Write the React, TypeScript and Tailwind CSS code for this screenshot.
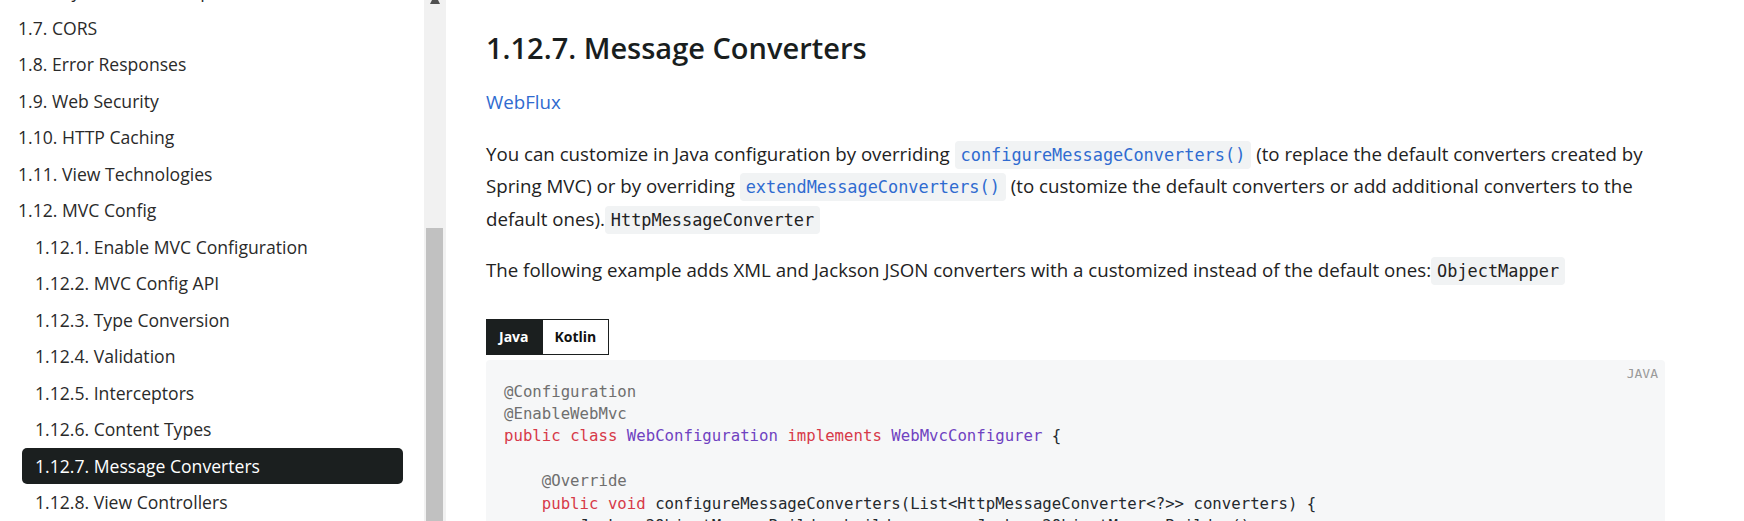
import React from "react";

const navItems: { label: string; level: number; active?: boolean }[] = [
  { label: "1.6. Asynchronous Requests", level: 1 },
  { label: "1.7. CORS", level: 1 },
  { label: "1.8. Error Responses", level: 1 },
  { label: "1.9. Web Security", level: 1 },
  { label: "1.10. HTTP Caching", level: 1 },
  { label: "1.11. View Technologies", level: 1 },
  { label: "1.12. MVC Config", level: 1 },
  { label: "1.12.1. Enable MVC Configuration", level: 2 },
  { label: "1.12.2. MVC Config API", level: 2 },
  { label: "1.12.3. Type Conversion", level: 2 },
  { label: "1.12.4. Validation", level: 2 },
  { label: "1.12.5. Interceptors", level: 2 },
  { label: "1.12.6. Content Types", level: 2 },
  { label: "1.12.7. Message Converters", level: 2, active: true },
  { label: "1.12.8. View Controllers", level: 2 },
  { label: "1.12.9. View Resolvers", level: 2 },
];

const sans = "font-['Open_Sans','Noto_Sans',sans-serif]";
const mono = "font-['DejaVu_Sans_Mono','Liberation_Mono',monospace]";

function Code({ children, link }: { children: React.ReactNode; link?: boolean }) {
  return (
    <code
      className={`${mono} text-[16.9px] leading-none rounded-[4px] bg-[#f1f3f4] px-[6px] py-[4px] ${
        link ? "text-[#2f6bd0]" : "text-[#222]"
      }`}
    >
      {children}
    </code>
  );
}

const A = ({ c }: { c: string }) => <span className="text-[#6f6f6f]">{c}</span>;
const K = ({ c }: { c: string }) => <span className="text-[#d73a49]">{c}</span>;
const T = ({ c }: { c: string }) => <span className="text-[#6f42c1]">{c}</span>;

export default function App() {
  return (
    <div className={`h-[521px] w-[1744px] overflow-hidden bg-white flex ${sans}`}>
      {/* Sidebar */}
      <aside className="w-[446px] h-full flex shrink-0">
        <nav className="flex-1 h-full overflow-hidden">
          <ul className="-mt-[27px] flex flex-col">
            {navItems.map((it) => (
              <li key={it.label} className={it.level === 2 ? "pl-[22px] pr-[21px]" : "pl-[5px] pr-[21px]"}>
                <div
                  className={`h-[36.5px] flex items-center pl-[13px] rounded-[5px] text-[17.6px] whitespace-nowrap ${
                    it.active ? "bg-[#1b1f1f] text-white" : "text-[#2a2a2a]"
                  }`}
                >
                  {it.label}
                </div>
              </li>
            ))}
          </ul>
        </nav>
        <div className="w-[22px] h-full bg-[#f1f1f1] flex flex-col">
          <svg width="22" height="4" viewBox="0 0 22 4" className="shrink-0">
            <polygon points="8,0 14,0 16,4 6,4" fill="#505050" />
          </svg>
          <div className="h-[224px] shrink-0" />
          <div className="ml-[2px] w-[17px] flex-1 bg-[#c1c1c1]" />
        </div>
      </aside>

      {/* Main content */}
      <main className="flex-1 h-full overflow-hidden pl-[40px] pr-[79px] pt-[28px]">
        <h2 className="text-[29px] leading-[40px] font-semibold text-[#191e1e] mb-[18px] whitespace-nowrap">
          1.12.7. Message Converters
        </h2>
        <div className="text-[18.7px] leading-[32.7px] mb-[19px]">
          <a className="text-[#2f6bd0]">WebFlux</a>
        </div>
        <p className="text-[18.7px] leading-[32.7px] text-[#222] mb-[18px]">
          <span className="block whitespace-nowrap">
            You can customize in Java configuration by overriding <Code link>configureMessageConverters()</Code> (to
            replace the default converters created by
          </span>
          <span className="block whitespace-nowrap">
            Spring MVC) or by overriding <Code link>extendMessageConverters()</Code> (to customize the default converters
            or add additional converters to the
          </span>
          <span className="block whitespace-nowrap">
            default ones).<Code>HttpMessageConverter</Code>
          </span>
        </p>
        <p className="text-[18.7px] leading-[32.7px] text-[#222] whitespace-nowrap mb-[32px]">
          The following example adds XML and Jackson JSON converters with a customized instead of the default ones:
          <Code>ObjectMapper</Code>
        </p>

        <div className="flex mb-[5px]">
          <button className="h-[36px] px-[12px] bg-[#1b1f1f] border border-[#1b1f1f] text-white text-[14px] font-bold">
            Java
          </button>
          <button className="h-[36px] px-[12px] bg-white border border-[#1b1f1f] text-[#111] text-[14px] font-bold">
            Kotlin
          </button>
        </div>

        <div className="relative rounded-[4px] bg-[#f6f7f8] pt-[21px] pl-[18px] pb-[20px]">
          <span className={`absolute right-[7px] top-[4px] ${mono} text-[13px] text-[#9a9a9a]`}>JAVA</span>
          <pre className={`${mono} text-[15.7px] leading-[22.4px] text-[#24292e]`}>
            <A c="@Configuration" />
            {"\n"}
            <A c="@EnableWebMvc" />
            {"\n"}
            <K c="public" /> <K c="class" /> <T c="WebConfiguration" /> <K c="implements" /> <T c="WebMvcConfigurer" />{" {"}
            {"\n\n    "}
            <A c="@Override" />
            {"\n    "}
            <K c="public" /> <K c="void" /> configureMessageConverters(List&lt;HttpMessageConverter&lt;?&gt;&gt; converters) {"{"}
            {"\n        "}Jackson2ObjectMapperBuilder builder = <K c="new" /> Jackson2ObjectMapperBuilder()
            {"\n                "}.indentOutput(<K c="true" />)
          </pre>
        </div>
      </main>
    </div>
  );
}
